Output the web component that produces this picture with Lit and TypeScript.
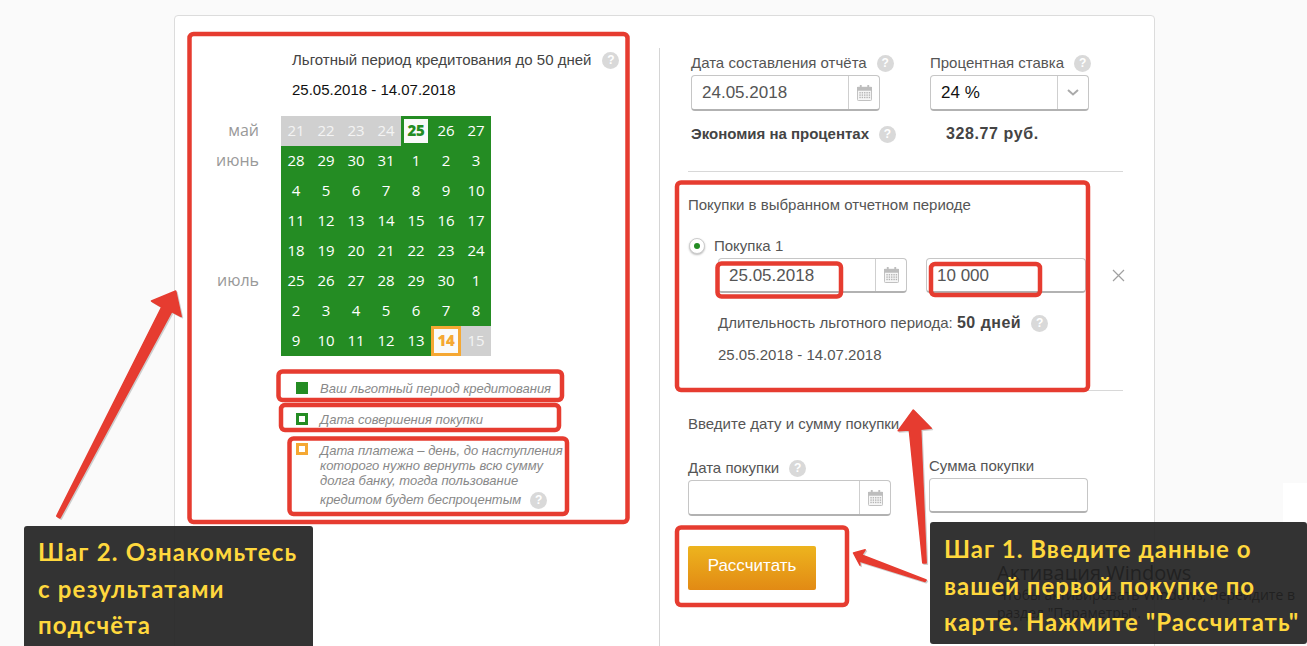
import { LitElement, html, css, svg } from "lit";
import { customElement } from "lit/decorators.js";

const days = [21,22,23,24,25,26,27,28,29,30,31,1,2,3,4,5,6,7,8,9,10,11,12,13,14,15,16,17,18,19,20,21,22,23,24,25,26,27,28,29,30,1,2,3,4,5,6,7,8,9,10,11,12,13,14,15];

const help = () => html`<span class="help">?</span>`;
const calIcon = () => html`<svg class="cal-ico" viewBox="0 0 16 17" width="15" height="16">
  <rect x="0.5" y="2.5" width="15" height="14" rx="1" fill="#f6f6f6" stroke="#bdbdbd"/>
  <rect x="0.5" y="2.5" width="15" height="3" fill="#bdbdbd" stroke="#bdbdbd"/>
  <rect x="3" y="0" width="2" height="4" fill="#bdbdbd"/><rect x="11" y="0" width="2" height="4" fill="#bdbdbd"/>
  ${[7.5, 10, 12.5].map((y) => [2.5, 5, 7.5, 10, 12.5].map((x) => svg`<rect x="${x}" y="${y}" width="1.5" height="1.5" fill="#b4b4b4"/>`))}
</svg>`;

@customElement("app-root")
export class AppRoot extends LitElement {
  static styles = css`
    :host { display: block; position: relative; width: 1307px; height: 646px; overflow: hidden; background: #fafafa; font-family: "Liberation Sans", Arial, sans-serif; font-size: 15px; color: #555; }
    .card { box-sizing: border-box; margin-left: 174px; position: relative; top: 15px; width: 981px; height: 700px; background: #fff; border: 1px solid #dcdcdc; border-radius: 4px; padding-top: 32px; display: flex; }
    .left { width: 484px; flex: none; }
    .right { flex: none; width: 490px; border-left: 1px solid #d5d5d5; padding-left: 28px; box-sizing: border-box; }
    .help { display: inline-block; flex: none; width: 17px; height: 17px; border-radius: 50%; background: #d9d9d9; color: #fff; font: bold 12px/17px "Liberation Sans", sans-serif; text-align: center; vertical-align: middle; }
    .head { padding-left: 117px; line-height: 24px; color: #444; }
    .head .row { display: flex; align-items: center; gap: 11px; }
    .head .dates { margin-top: 6px; color: #111; }
    .cal-wrap { display: flex; margin-top: 14px; }
    .months { width: 84px; margin-right: 22px; display: grid; grid-template-rows: repeat(8, 30px); font: 16px/28px "Open Sans", sans-serif; color: #999; text-align: right; }
    .m6 { grid-row: 6; }
    .cal { display: grid; grid-template-columns: repeat(7, 30px); grid-auto-rows: 30px; width: 210px; }
    .d { background: #248c23; color: #fff; font: 15px/28px "Open Sans", sans-serif; text-align: center; box-sizing: border-box; letter-spacing: -.2px; }
    .d.off { background: #d0d0d0; color: #f4f4f4; }
    .d.start { box-shadow: inset 0 0 0 3px #248c23, inset 0 0 0 20px #fafafa; color: #248c23; font-weight: 800; }
    .d.end { background: #fafafa; border: 3px solid #f5a833; color: #f5a833; font-weight: 800; line-height: 23px; }
    .legend { padding-left: 121px; margin-top: 24px; font: italic 13px/15px "Liberation Sans", sans-serif; color: #888; }
    .lrow { display: flex; align-items: center; gap: 12px; min-height: 16px; }
    .lrow + .lrow { margin-top: 15px; }
    .lrow.top { align-items: flex-start; margin-top: 16px; width: 262px; white-space: nowrap; }
    .sw { width: 12px; height: 12px; box-sizing: border-box; flex: none; }
    .sw.g { background: #248c23; }
    .sw.o { border: 3px solid #248c23; background: #fff; }
    .sw.y { border: 3px solid #f5a833; background: #fff; }
    .last { display: block; margin-top: 2px; line-height: 19px; }
    .last .help { margin-left: 9px; }

    .fields { display: flex; padding-left: 3px; gap: 50px; }
    .lab { display: flex; align-items: center; gap: 10px; line-height: 20px; height: 20px; white-space: nowrap; }
    .f1 { padding-top: 5px; width: 189px; }
    .f2 { padding-top: 5px; width: 159px; }
    .inp { box-sizing: border-box; display: flex; align-items: center; height: 36px; margin-top: 2px; background: #fff; border: 1px solid #c6c6c6; border-bottom: 2px solid #b2b2b2; border-radius: 4px; font-size: 17px; color: #555; }
    .inp .v { flex: 1; padding-left: 10px; white-space: nowrap; }
    .inp .side { width: 30px; height: 100%; border-left: 1px solid #cfcfcf; display: flex; align-items: center; justify-content: center; flex: none; }
    .black { color: #111; }
    .save { display: flex; padding-left: 3px; margin-top: 13px; line-height: 20px; font-weight: bold; color: #444; }
    .save .l { width: 255px; display: flex; align-items: center; gap: 10px; }
    .save .val { font-size: 16px; letter-spacing: .6px; }
    .hr { height: 1px; width: 435px; background: #d8d8d8; }
    .ttl { line-height: 20px; white-space: nowrap; }
    .radio { display: flex; align-items: center; gap: 9px; margin: 21px 0 0 1px; line-height: 22px; height: 20px; }
    .rad { box-sizing: border-box; width: 16px; height: 16px; border-radius: 50%; border: 1px solid #ccc; background: #fff; box-shadow: 0 1px 2px #bbb; display: flex; align-items: center; justify-content: center; }
    .rad i { width: 6px; height: 6px; border-radius: 50%; background: #248c23; }
    .buy { display: flex; align-items: center; margin: 2px 0 0 30px; }
    .buy .inp { margin-top: 0; height: 35px; }
    .buy .v { line-height: 22px; padding-top: 1px; }
    .buy .a { width: 189px; }
    .buy .b { width: 160px; margin-left: 19px; }
    .x { margin-left: 26px; flex: none; }
    .dur { margin: 20px 0 0 30px; display: flex; align-items: center; line-height: 20px; white-space: pre; }
    .dur b { font-size: 16px; letter-spacing: .5px; color: #444; }
    .dur .help { margin-left: 10px; }
    .per { margin: 12px 0 0 30px; line-height: 20px; }
    .newf { display: flex; }
    .nf1 { margin-top: 24px; width: 203px; }
    .nf2 { margin: 22px 0 0 38px; width: 159px; }
    .nf2 .inp { height: 35px; }
    .btn { display: block; box-sizing: border-box; width: 128px; height: 44px; margin-top: 30px; border: 0; border-radius: 2px; background: linear-gradient(#edb41e, #e28a14); color: #fff; font: 17px/20px "Liberation Sans", sans-serif; text-align: center; padding: 0 0 4px; }

    .patch { position: absolute; left: 1283px; top: 483px; width: 24px; height: 40px; background: #fff; }
    .wm { position: absolute; left: 997px; top: 560px; color: #000; white-space: nowrap; font: 14px/18px "Open Sans", sans-serif; }
    .wm div:first-child { font-size: 20px; line-height: 26px; }
    .note { position: absolute; box-sizing: border-box; background: rgba(36,36,36,.93); border-radius: 3px; color: #ffd83d; font: 700 24px/36.5px "Lato", sans-serif; white-space: nowrap; }
    .n1 { left: 24px; top: 526px; width: 289px; height: 130px; padding: 8px 0 0 14px; letter-spacing: 1.2px; }
    .n2 { left: 930px; top: 522px; width: 377px; height: 122px; padding: 9px 0 0 14px; letter-spacing: 1px; }
    .over { position: absolute; left: 0; top: 0; }
  `;

  render() {
    return html`
      <div class="card">
        <section class="left">
          <div class="head">
            <div class="row">Льготный период кредитования до 50 дней ${help()}</div>
            <div class="dates">25.05.2018 - 14.07.2018</div>
          </div>
          <div class="cal-wrap">
            <div class="months"><div>май</div><div>июнь</div><div class="m6">июль</div></div>
            <div class="cal">
              ${days.map((n, i) => {
                const cls = i < 4 || i === 55 ? "off" : i === 4 ? "start" : i === 54 ? "end" : "";
                return html`<div class="d ${cls}">${n}</div>`;
              })}
            </div>
          </div>
          <div class="legend">
            <div class="lrow"><span class="sw g"></span>Ваш льготный период кредитования</div>
            <div class="lrow"><span class="sw o"></span>Дата совершения покупки</div>
            <div class="lrow top"><span class="sw y"></span>
              <div>Дата платежа – день, до наступления<br>которого нужно вернуть всю сумму<br>долга банку, тогда пользование
                <span class="last">кредитом будет беспроцентым${help()}</span></div>
            </div>
          </div>
        </section>
        <section class="right">
          <div class="fields">
            <div class="f1">
              <div class="lab">Дата составления отчёта ${help()}</div>
              <div class="inp"><span class="v">24.05.2018</span><span class="side">${calIcon()}</span></div>
            </div>
            <div class="f2">
              <div class="lab">Процентная ставка ${help()}</div>
              <div class="inp"><span class="v black">24 %</span><span class="side"><svg width="12" height="7" viewBox="0 0 12 7"><path d="M1 1l5 4.5L11 1" fill="none" stroke="#aaa" stroke-width="2"/></svg></span></div>
            </div>
          </div>
          <div class="save"><div class="l">Экономия на процентах ${help()}</div><div class="val">328.77 руб.</div></div>
          <div class="hr" style="margin-top:27px"></div>
          <div class="ttl" style="margin-top:23px">Покупки в выбранном отчетном периоде</div>
          <div class="radio"><span class="rad"><i></i></span>Покупка 1</div>
          <div class="buy">
            <div class="inp a"><span class="v">25.05.2018</span><span class="side">${calIcon()}</span></div>
            <div class="inp b"><span class="v">10 000</span></div>
            <svg class="x" width="13" height="13" viewBox="0 0 13 13"><path d="M1 1l11 11M12 1L1 12" stroke="#a0a0a0" stroke-width="1.2" fill="none"/></svg>
          </div>
          <div class="dur">Длительность льготного периода: <b>50 дней</b>${help()}</div>
          <div class="per">25.05.2018 - 14.07.2018</div>
          <div class="hr" style="margin-top:25px"></div>
          <div class="ttl" style="margin-top:23px">Введите дату и сумму покупки</div>
          <div class="newf">
            <div class="nf1">
              <div class="lab">Дата покупки ${help()}</div>
              <div class="inp"><span class="v"></span><span class="side">${calIcon()}</span></div>
            </div>
            <div class="nf2">
              <div class="lab">Сумма покупки</div>
              <div class="inp"></div>
            </div>
          </div>
          <button class="btn">Рассчитать</button>
        </section>
      </div>

      <div class="patch"></div>
      <div class="wm"><div>Активация Windows</div><div>Чтобы активировать Windows, перейдите в</div><div>раздел "Параметры".</div></div>
      <div class="note n1">Шаг 2. Ознакомьтесь<br>с результатами<br>подсчёта</div>
      <div class="note n2">Шаг 1. Введите данные о<br>вашей первой покупке по<br>карте. Нажмите "Рассчитать"</div>

      <svg class="over" width="1307" height="646" viewBox="0 0 1307 646" fill="none">
        <g stroke="#e63c30" stroke-width="4.5">
          ${[
            [189.5, 34, 438, 488],
            [278.5, 371.5, 283.5, 28.5],
            [281, 405, 278, 25],
            [289.5, 438.5, 277.5, 75.5],
            [677, 182.5, 411, 207.5],
            [717.5, 263.5, 123.5, 33],
            [931, 264, 109, 31],
            [677, 527.5, 170, 77.5],
          ].map(([x, y, w, h]) => svg`<rect x="${x}" y="${y}" width="${w}" height="${h}" rx="4"/>`)}
        </g>
        ${[
          "M56.7 516 L161.7 307 L151.5 301 L175.7 291 L181.2 316.5 L171.7 311.7 L60 518 Z",
          "M922.8 563 L909.3 430 L898.2 430.7 L913.3 410 L931.2 428.3 L920.7 429.3 L926.2 563 Z",
          "M926.2 580 L861.7 555 L865.2 549.8 L853.5 553 L860 565.2 L859.3 561 L925 581.6 Z",
        ].map((d) => svg`
          <path d="${d}" transform="translate(1.2 1.2)" fill="#bbb" stroke="#bbb" stroke-width="1.5" stroke-linejoin="round" opacity=".7"/>
          <path d="${d}" fill="#e63c30" stroke="#e63c30" stroke-width="1.5" stroke-linejoin="round"/>`)}
      </svg>
    `;
  }
}
